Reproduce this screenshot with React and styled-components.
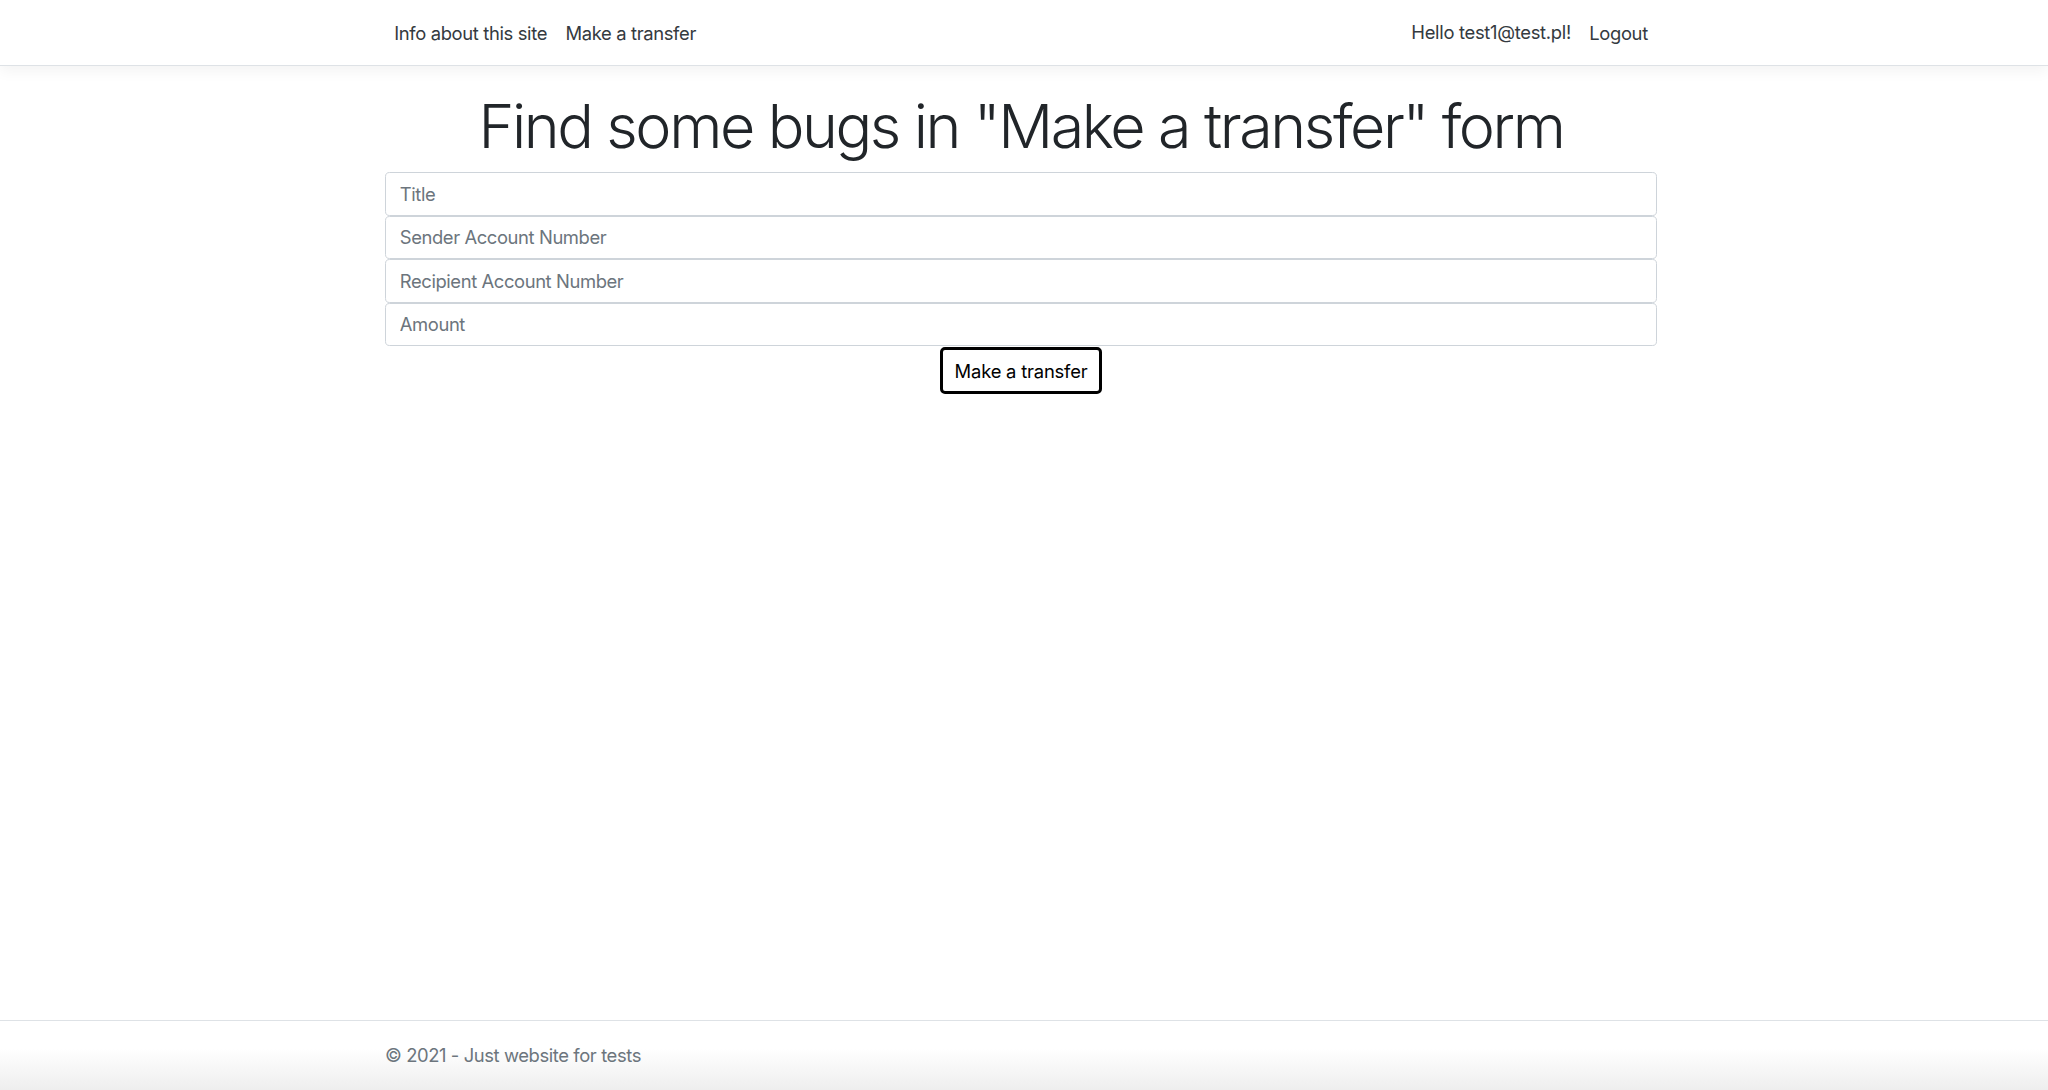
import React from "react";
import styled, { createGlobalStyle } from "styled-components";

const GlobalStyle = createGlobalStyle`
  html, body {
    margin: 0;
    padding: 0;
    background: #ffffff;
  }
  body {
    font-family: Inter, "Liberation Sans", Arial, sans-serif;
    font-size: 18.4px;
    color: #212529;
  }
  * { box-sizing: border-box; }
`;

const Page = styled.div`
  display: flex;
  flex-direction: column;
  min-height: 100vh;
`;

const Header = styled.header`
  height: 66px;
  border-bottom: 1px solid #dee2e6;
  box-shadow: 0 4.6px 13.8px rgba(0, 0, 0, 0.05);
  background: #fff;
  position: relative;
  z-index: 1;
`;

const Container = styled.div`
  width: 1272px;
  margin-left: calc(50% - 639px);
`;

const NavBar = styled(Container)`
  height: 100%;
  display: flex;
  align-items: center;
  justify-content: space-between;
`;

const NavGroup = styled.nav`
  display: flex;
  align-items: center;
`;

const NavLink = styled.a`
  display: block;
  padding: 10.5px 9.2px 7.5px;
  color: #343a40;
  font-size: 18.4px;
  letter-spacing: -0.35px;
  line-height: 1.5;
  text-decoration: none;
  cursor: pointer;
`;

const Greeting = styled.span`
  display: block;
  padding: 9.5px 9.2px 8.5px;
  color: #343a40;
  font-size: 18.4px;
  letter-spacing: -0.3px;
  line-height: 1.5;
`;

const Main = styled(Container)`
  flex: 1;
  padding-top: 22px;
  display: flex;
  flex-direction: column;
  align-items: center;
`;

const Title = styled.h1`
  margin: 0 0 7px;
  font-size: 61px;
  font-weight: 300;
  letter-spacing: -2.4px;
  line-height: 77px;
  color: #212529;
  text-align: center;
  white-space: nowrap;
`;

const Form = styled.form`
  width: 100%;
  display: flex;
  flex-direction: column;
  align-items: center;
`;

const Input = styled.input`
  display: block;
  width: 100%;
  height: 43.5px;
  padding: 0 13.8px;
  font-family: inherit;
  font-size: 18.4px;
  letter-spacing: -0.4px;
  color: #495057;
  background: #fff;
  border: 1px solid #ced4da;
  border-radius: 4.6px;
  outline: none;
  &::placeholder {
    color: #6c757d;
    opacity: 1;
  }
`;

const SubmitButton = styled.button`
  margin-top: 1px;
  width: 162px;
  height: 47px;
  font-family: inherit;
  font-size: 18.4px;
  letter-spacing: -0.2px;
  color: #000;
  background: #fff;
  border: 3px solid #000;
  border-radius: 5px;
  cursor: pointer;
`;

const Footer = styled.footer`
  height: 70px;
  border-top: 1px solid #dee2e6;
  background: linear-gradient(to bottom, #ffffff 0%, #ffffff 40%, #eeeeee 100%);
`;

const FooterText = styled(Container)`
  line-height: 69px;
  color: #6c757d;
  font-size: 18.4px;
  letter-spacing: -0.4px;
`;

export default function App() {
  return (
    <>
      <GlobalStyle />
      <Page>
        <Header>
          <NavBar>
            <NavGroup>
              <NavLink>Info about this site</NavLink>
              <NavLink>Make a transfer</NavLink>
            </NavGroup>
            <NavGroup>
              <Greeting>Hello test1@test.pl!</Greeting>
              <NavLink>Logout</NavLink>
            </NavGroup>
          </NavBar>
        </Header>
        <Main>
          <Title>Find some bugs in "Make a transfer" form</Title>
          <Form onSubmit={(e) => e.preventDefault()}>
            <Input placeholder="Title" />
            <Input placeholder="Sender Account Number" />
            <Input placeholder="Recipient Account Number" />
            <Input placeholder="Amount" />
            <SubmitButton type="submit">Make a transfer</SubmitButton>
          </Form>
        </Main>
        <Footer>
          <FooterText>© 2021 - Just website for tests</FooterText>
        </Footer>
      </Page>
    </>
  );
}
